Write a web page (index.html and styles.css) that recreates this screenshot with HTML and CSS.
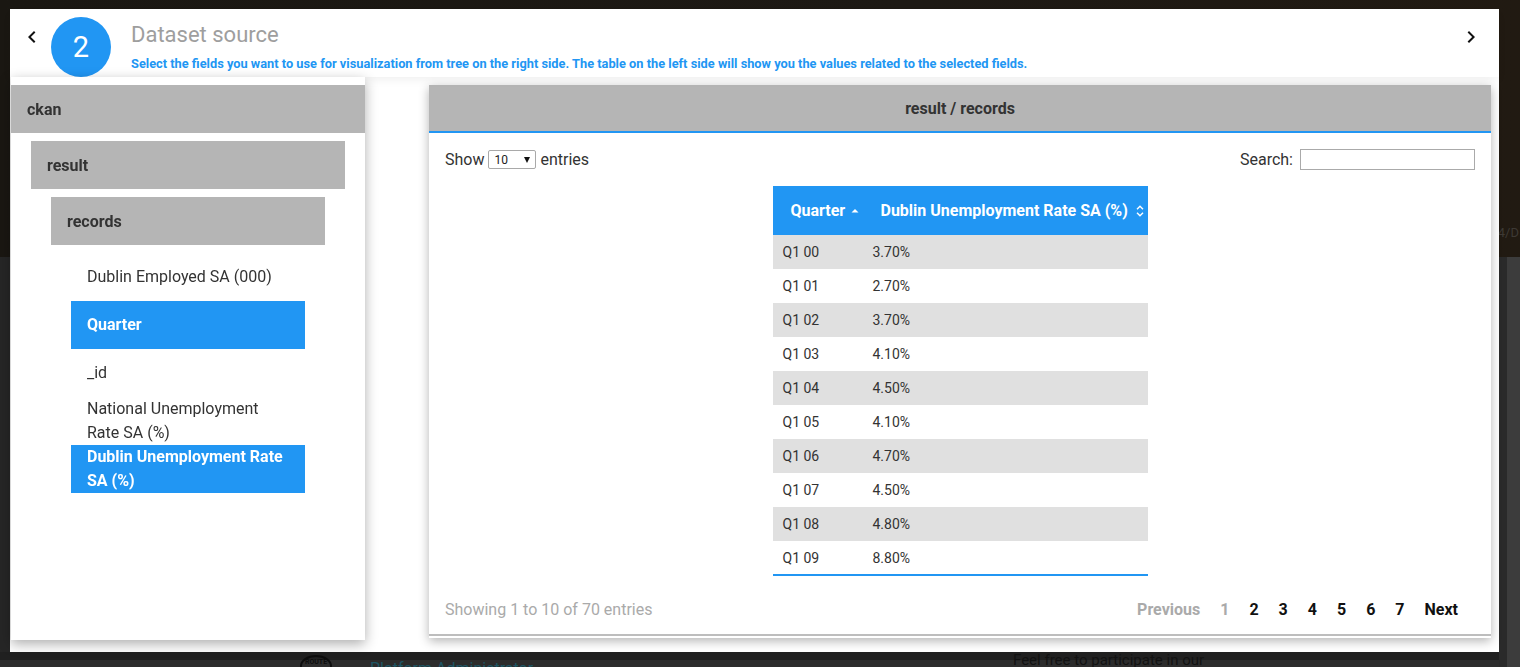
FILE: index.html
```html
<!DOCTYPE html>
<html lang="en">
<head>
<meta charset="utf-8">
<title>Dataset source</title>
<link rel="stylesheet" href="styles.css">
</head>
<body>
<div class="site">
  <div class="hero"><span class="hero-text">4/D</span></div>
  <div class="content">
    <div class="content-main">
      <div class="band"></div>
      <div class="footer">
        <div class="footer-logo">ROUTE</div>
        <div class="footer-link">Platform Administrator</div>
        <div class="footer-note">Feel free to participate in our</div>
      </div>
    </div>
    <div class="track"></div>
  </div>
</div>

<div class="modal">
  <header class="modal-head">
    <button class="nav nav-prev" aria-label="Previous step">
      <svg viewBox="0 0 24 24" width="24" height="24"><path d="M15.41 7.41L14 6l-6 6 6 6 1.41-1.41L10.83 12z"/></svg>
    </button>
    <div class="step">2</div>
    <div class="titles">
      <h1 class="title">Dataset source</h1>
      <p class="subtitle">Select the fields you want to use for visualization from tree on the right side. The table on the left side will show you the values related to the selected fields.</p>
    </div>
    <button class="nav nav-next" aria-label="Next step">
      <svg viewBox="0 0 24 24" width="24" height="24"><path d="M10 6L8.59 7.41 13.17 12l-4.58 4.59L10 18l6-6z"/></svg>
    </button>
  </header>

  <div class="modal-body">
    <aside class="tree">
      <div class="node node-l0">ckan</div>
      <div class="node node-l1">result</div>
      <div class="node node-l2">records</div>
      <ul class="leaves">
        <li class="leaf">Dublin Employed SA (000)</li>
        <li class="leaf leaf-on">Quarter</li>
        <li class="leaf">_id</li>
        <li class="leaf">National Unemployment Rate SA (%)</li>
        <li class="leaf leaf-on">Dublin Unemployment Rate SA (%)</li>
      </ul>
    </aside>

    <section class="records">
      <div class="rec-head">result / records</div>
      <div class="rec-body">
        <div class="controls">
          <label class="length">Show
            <span class="select"><span>10</span><span class="caret"></span></span>
            entries</label>
          <label class="search">Search: <input type="text" class="search-input"></label>
        </div>

        <table class="grid">
          <colgroup><col class="c1"><col class="c2"></colgroup>
          <thead>
            <tr>
              <th><div class="th-in"><span>Quarter</span>
                <svg class="sort" viewBox="0 0 10 16" width="10" height="16"><path d="M1.5 9.5L5 6l3.5 3.5z" fill="#fff"/></svg></div></th>
              <th><div class="th-in"><span>Dublin Unemployment Rate SA (%)</span>
                <svg class="sort" viewBox="0 0 10 16" width="10" height="16"><path d="M2 6.2L5 3.2 8 6.2M2 9.8L5 12.8 8 9.8" fill="none" stroke="#fff" stroke-width="1.4"/></svg></div></th>
            </tr>
          </thead>
          <tbody>
            <tr><td>Q1 00</td><td>3.70%</td></tr>
            <tr><td>Q1 01</td><td>2.70%</td></tr>
            <tr><td>Q1 02</td><td>3.70%</td></tr>
            <tr><td>Q1 03</td><td>4.10%</td></tr>
            <tr><td>Q1 04</td><td>4.50%</td></tr>
            <tr><td>Q1 05</td><td>4.10%</td></tr>
            <tr><td>Q1 06</td><td>4.70%</td></tr>
            <tr><td>Q1 07</td><td>4.50%</td></tr>
            <tr><td>Q1 08</td><td>4.80%</td></tr>
            <tr><td>Q1 09</td><td>8.80%</td></tr>
          </tbody>
        </table>

        <div class="foot">
          <div class="info">Showing 1 to 10 of 70 entries</div>
          <nav class="pager">
            <span class="pg pg-off">Previous</span>
            <span class="pg pg-off">1</span>
            <span class="pg">2</span>
            <span class="pg">3</span>
            <span class="pg">4</span>
            <span class="pg">5</span>
            <span class="pg">6</span>
            <span class="pg">7</span>
            <span class="pg">Next</span>
          </nav>
        </div>
      </div>
      <div class="rec-line"></div>
    </section>
  </div>
</div>
</body>
</html>
```

FILE: styles.css
```css
* { box-sizing: border-box; }

html, body {
  margin: 0;
  padding: 0;
  height: 100%;
  overflow: hidden;
}

body {
  font-family: Roboto, "Liberation Sans", Arial, sans-serif;
  background: #2a2a2a;
  color: #333;
}

/* ---------- page behind the dialog ---------- */
.site {
  display: flex;
  flex-direction: column;
  height: 667px;
  overflow: hidden;
}

.hero {
  flex: none;
  height: 257px;
  background: linear-gradient(90deg, #1a1712 0%, #1d1914 60%, #211a12 100%);
  display: flex;
  justify-content: flex-end;
  align-items: flex-end;
  padding-bottom: 17px;
  overflow: hidden;
}

.hero-text {
  color: #3d3934;
  font-size: 13px;
  margin-right: 1px;
}

.content {
  flex: 1;
  min-height: 0;
  display: flex;
}

.content-main {
  flex: 1;
  display: flex;
  flex-direction: column;
  background: #262626;
}

.band {
  flex: none;
  height: 395px;
  background: #262626;
}

.footer {
  flex: 1;
  min-height: 0;
  overflow: hidden;
  background: linear-gradient(#202020 0, #202020 8px, #2c2c2c 8px);
  display: flex;
  align-items: flex-start;
}

.footer-logo {
  margin-left: 300px;
  margin-top: 3px;
  width: 32px;
  height: 22px;
  border: 2px solid #0d0d0d;
  border-bottom: 0;
  border-radius: 50% 50% 0 0;
  font-size: 7px;
  line-height: 10px;
  color: #0d0d0d;
  text-align: center;
  font-weight: 700;
}

.footer-link {
  width: 180px;
  margin-left: 38px;
  margin-top: 7px;
  color: #1d5563;
  font-size: 16px;
  white-space: nowrap;
}

.footer-note {
  margin-left: 463px;
  margin-top: -1px;
  color: #121212;
  font-size: 15px;
  white-space: nowrap;
}

.track {
  width: 13px;
  background: #3c3c3c;
  margin-left: 8px;
}

/* ---------- dialog ---------- */
.modal {
  position: fixed;
  top: 9px;
  left: 10px;
  width: 1489px;
  height: 643px;
  background: #fff;
  display: flex;
  flex-direction: column;
}

.modal-head {
  height: 68px;
  flex: none;
  display: flex;
  align-items: flex-start;
  position: relative;
  z-index: 1;
  box-shadow: 0 4px 10px -2px rgba(0, 0, 0, 0.07);
}

.nav {
  width: 24px;
  height: 24px;
  padding: 0;
  border: 0;
  background: none;
  margin-top: 16px;
  display: flex;
}

.nav svg { fill: #111; }

.nav-prev { margin-left: 10px; }

.nav-next {
  margin-left: auto;
  margin-right: 16px;
}

.step {
  width: 60px;
  height: 60px;
  border-radius: 50%;
  background: #2196f3;
  color: #fff;
  font-size: 29px;
  display: flex;
  align-items: center;
  justify-content: center;
  margin: 8px 0 0 7px;
}

.titles {
  margin-left: 20px;
}

.title {
  margin: 13px 0 0;
  font-size: 22px;
  line-height: 26px;
  font-weight: 400;
  color: #9e9e9e;
}

.subtitle {
  margin: 8px 0 0;
  font-size: 12.8px;
  line-height: 16px;
  font-weight: 700;
  color: #2196f3;
}

.modal-body {
  flex: 1;
  display: flex;
  align-items: flex-start;
}

/* ---------- tree ---------- */
.tree {
  width: 354px;
  height: 563px;
  margin-left: 1px;
  padding-top: 8px;
  background: #fff;
  position: relative;
  z-index: 2;
  box-shadow: 0 4px 12px rgba(0, 0, 0, 0.32);
}

.node {
  min-height: 48px;
  display: flex;
  align-items: center;
  padding: 0 16px;
  background: #b5b5b5;
  font-size: 16px;
  font-weight: 700;
  color: #333;
}

.node-l1 { margin: 8px 20px 0; }
.node-l2 { margin: 8px 40px 0; }

.leaves {
  list-style: none;
  margin: 8px 60px 0;
  padding: 0;
}

.leaf {
  min-height: 48px;
  display: flex;
  align-items: center;
  padding: 0 16px;
  font-size: 16px;
  line-height: 24px;
  color: #333;
}

.leaf-on {
  background: #2196f3;
  color: #fff;
  font-weight: 700;
}

/* ---------- records panel ---------- */
.records {
  width: 1062px;
  margin: 8px 0 0 64px;
  background: #fff;
  box-shadow: 0 3px 10px rgba(0, 0, 0, 0.3);
  padding-bottom: 2px;
}

.rec-head {
  height: 48px;
  background: #b5b5b5;
  border-bottom: 2px solid #2196f3;
  display: flex;
  align-items: center;
  justify-content: center;
  font-size: 16px;
  font-weight: 700;
  color: #333;
}

.rec-body {
  padding: 16px 16px 0;
}

.controls {
  display: flex;
  justify-content: space-between;
  align-items: center;
  height: 21px;
  font-size: 16px;
  color: #333;
}

.length, .search {
  display: flex;
  align-items: center;
}

.select {
  display: inline-flex;
  align-items: center;
  justify-content: space-between;
  width: 48px;
  height: 19px;
  margin: 0 4px;
  padding: 0 5px 0 5px;
  border: 1px solid #a9a9a9;
  border-radius: 2px;
  font-size: 12px;
  color: #222;
}

.caret {
  width: 0;
  height: 0;
  border-left: 3.5px solid transparent;
  border-right: 3.5px solid transparent;
  border-top: 6px solid #111;
}

.search-input {
  width: 175px;
  height: 21px;
  margin-left: 7px;
  border: 1px solid #aaa;
  padding: 0 4px;
  font: inherit;
}

.grid {
  margin: 16px auto 0;
  width: 375px;
  border-collapse: collapse;
  table-layout: fixed;
  border-bottom: 2px solid #2196f3;
}

.c1 { width: 90px; }
.c2 { width: 285px; }

.grid th {
  height: 49px;
  padding: 0;
  background: #2196f3;
  color: #fff;
  font-size: 16px;
  font-weight: 700;
  text-align: left;
}

.th-in {
  display: flex;
  align-items: center;
  justify-content: space-between;
  padding: 0 3px 0 18px;
  white-space: nowrap;
}

.grid td {
  height: 34px;
  padding: 0 10px;
  font-size: 14px;
  color: #333;
}

.grid tbody tr:nth-child(odd) td {
  background: #e0e0e0;
}

.foot {
  display: flex;
  justify-content: space-between;
  align-items: center;
  margin-top: 22px;
  height: 23px;
  margin-bottom: 13px;
}

.info {
  font-size: 16px;
  color: #aaa;
}

.pager {
  display: flex;
  margin-right: 7px;
}

.pg {
  padding: 0 10px;
  font-size: 16px;
  font-weight: 700;
  color: #111;
}

.pg-off { color: #aaa; }

.rec-line {
  height: 2px;
  background: #bdbdbd;
}
```
